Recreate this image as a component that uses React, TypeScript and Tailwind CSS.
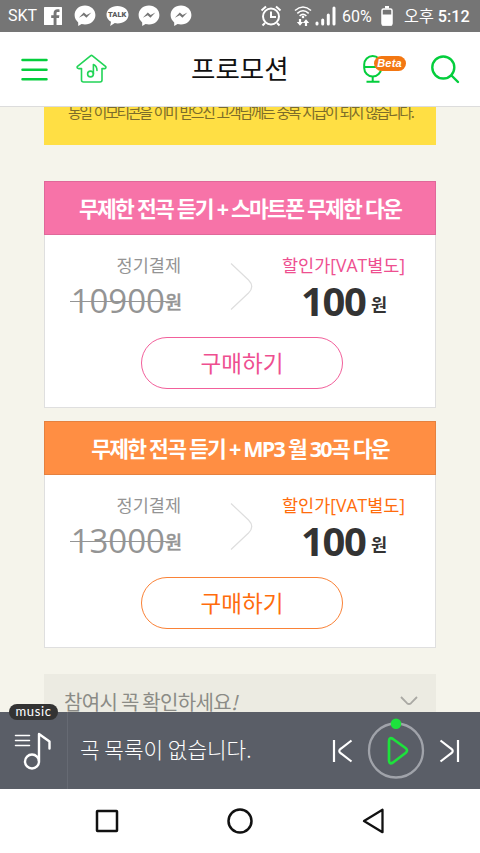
import React from "react";

const KR = "font-['Noto_Sans_CJK_KR',sans-serif]";
const LATIN = "font-['Open_Sans','Noto_Sans_CJK_KR',sans-serif]";
const ROBOTO = "font-['Roboto','Noto_Sans_CJK_KR',sans-serif]";

function MessengerIcon() {
  return (
    <svg width="22" height="22" viewBox="0 0 22 22">
      <path d="M11 0.5C5 0.5 0.6 4.7 0.6 10.1c0 3 1.4 5.6 3.6 7.3v3.6l3.4-1.9c1.1.3 2.2.5 3.4.5 6 0 10.4-4.2 10.4-9.5S17 .5 11 .5Z" fill="#fff" />
      <path d="M4.8 12.8 9.8 7.6l2.8 2.5 4.8-2.6-5 5.3-2.7-2.6Z" fill="#757575" />
    </svg>
  );
}

function StatusBar() {
  return (
    <div className={`flex h-8 shrink-0 items-center bg-[#757575] text-white ${ROBOTO}`}>
      <span className="ml-2 w-9 text-[16px] leading-8 whitespace-nowrap">SKT</span>
      <svg width="18" height="18" viewBox="0 0 18 18">
        <rect width="18" height="18" rx="0.500" fill="#fff" />
        <path fill="#757575" d="M9.600 18v-7H7.200V8.200h2.400V6.200c0-2.600 1.500-3.900 3.900-3.900.9 0 1.700.1 2 .1v2.700H14c-1.200 0-1.500.5-1.500 1.400v1.700h2.900L15 11h-2.500v7Z" />
      </svg>
      <div className="ml-3 flex w-[118px] items-center justify-between">
        <MessengerIcon />
        <div className="relative h-[21px] w-[23px]">
          <svg width="23" height="21" viewBox="0 0 23 21">
            <path fill="#fff" d="M11.500 0C5.200 0 .5 3.800.5 8.700c0 3 1.800 5.600 4.500 7.100l-.8 4.300 4.600-3c.9.200 1.800.3 2.700.3 6.300 0 11-3.800 11-8.700S17.800 0 11.500 0Z" />
          </svg>
          <span className="absolute inset-x-0 top-[2px] text-center text-[7.500px] leading-[13px] font-black text-[#5c5c5c]">TALK</span>
        </div>
        <MessengerIcon />
        <MessengerIcon />
      </div>
      <div className="ml-[68px] flex items-center">
        <svg width="22" height="22" viewBox="0 0 22 22" fill="none" stroke="#fff" strokeWidth="2">
          <circle cx="11" cy="11.500" r="8" />
          <path d="M11 6.500v5.500h5M1.500 5.500 6 1.500M16 1.500l4.500 4M5 18l-2.500 2.500M17 18l2.500 2.500" />
        </svg>
        <svg className="ml-[12px]" width="18" height="22" viewBox="0 0 18 22" fill="none" stroke="#fff" strokeWidth="1.600">
          <path d="M1 5.500Q9-1.500 17 5.500M3.300 8.300Q9 3.200 14.700 8.300M5.600 11Q9 7.800 12.400 11" />
          <circle cx="9" cy="12" r="1.300" fill="#fff" stroke="none" />
          <path d="M6 14v4M12 21v-4" strokeWidth="2.200" />
          <path d="M2.800 17h6.400L6 20.800ZM8.800 18h6.400L12 14.200Z" fill="#fff" stroke="none" />
        </svg>
        <svg className="ml-[3px]" width="21" height="20" viewBox="0 0 21 20" fill="none" stroke="#fff" strokeWidth="3" strokeLinecap="round">
          <path d="M2 18v-1M7.700 18v-4M13.300 18v-9M19 18V2" />
        </svg>
        <span className="mt-px ml-[6px] w-[33px] text-[16px] leading-8">60%</span>
        <svg className="ml-[6px]" width="12" height="20" viewBox="0 0 12 20">
          <path d="M4 0h4v2.500H4Z" fill="#fff" />
          <rect x="1" y="3" width="10" height="16" rx="1.500" fill="none" stroke="#fff" strokeWidth="1.500" />
          <rect x="1" y="8.500" width="10" height="11" fill="#fff" />
        </svg>
        <span className="mt-px ml-[11px] text-[16.200px] leading-8 whitespace-nowrap">오후 <span className="font-medium">5:12</span></span>
      </div>
    </div>
  );
}

function Header() {
  return (
    <header className="flex h-[75px] shrink-0 items-center border-b border-[#dcdcdc] bg-white">
      <svg className="ml-[21px]" width="27" height="24" viewBox="0 0 27 24" stroke="#04ce3c" strokeWidth="2.500" strokeLinecap="round">
        <path d="M1.500 3h24M1.500 12.800h24M1.500 22.300h24" />
      </svg>
      <svg className="ml-[28px]" width="31" height="30" viewBox="0 0 31 30" fill="none" stroke="#22d457" strokeWidth="1.600" strokeLinejoin="round" strokeLinecap="round">
        <path d="M14.500 1.800q1-.8 2 0L29.800 12.600q.5 2-1.400 2H26V26q0 2-2 2H7.500q-2 0-2-2V14.600H2.800q-2 0-1.600-2Z" />
        <circle cx="14.500" cy="20" r="2.900" />
        <path d="M17.400 20v-9.500q3.600 1.500 3.600 6" />
      </svg>
      <h1 className={`-mt-[2px] ml-[84px] w-[98px] text-[26.500px] leading-[40px] whitespace-nowrap text-[#111] ${KR}`}>프로모션</h1>
      <div className="relative ml-[74px] h-[30px] w-[44px]">
        <svg width="44" height="30" viewBox="0 0 44 30" fill="none" stroke="#04ce3c" strokeWidth="2">
          <rect x="1.200" y="2" width="17" height="20.500" rx="8.500" />
          <path d="M1.500 13h16.500M9.700 22.500v5M3.500 27.700h13" />
        </svg>
        <span className="absolute top-[2px] left-[11px] h-[15px] w-[32px] rounded-full bg-[#f37712] pr-px text-center font-['Liberation_Sans',sans-serif] text-[11px] leading-[15px] font-bold tracking-[0.200px] text-white italic">Beta</span>
      </div>
      <svg className="ml-[23px]" width="30" height="30" viewBox="0 0 30 30" fill="none" stroke="#04ce3c" strokeWidth="2.400" strokeLinecap="round">
        <circle cx="13.300" cy="13.500" r="11" />
        <path d="m21.500 21.500 6.500 6.500" />
      </svg>
    </header>
  );
}

interface OfferProps {
  title: string;
  price: string;
  headClass: string;
  labelClass: string;
  buttonClass: string;
}

function Offer({ title, price, headClass, labelClass, buttonClass }: OfferProps) {
  return (
    <section className="h-[227px] border border-[#dfdfdf] bg-white">
      <h2 className={`-mx-px -mt-px h-[54px] border pt-px text-center text-[21.500px] leading-[52px] font-bold tracking-[-1.750px] whitespace-nowrap text-white ${headClass} ${LATIN}`}>{title}</h2>
      <div className="flex h-[102px]">
        <div className="flex w-[136px] flex-col items-end text-[#949494]">
          <span className={`mt-[18px] text-[17.500px] leading-[24px] ${KR}`}>정기결제</span>
          <div className="mt-[2px] flex items-center">
            <span className={`relative text-[33px] leading-[44px] ${LATIN}`}>
              {price}
              <span className="absolute -right-px -left-px top-[22px] h-px bg-[#949494]" />
            </span>
            <span className={`-mr-px text-[18.500px] leading-[44px] font-medium [-webkit-text-stroke:0.400px_#949494] ${KR}`}>원</span>
          </div>
        </div>
        <svg className="mt-[27px] ml-[49px]" width="24" height="50" viewBox="0 0 24 50" fill="none" stroke="#dedede" strokeWidth="1.200">
          <path d="M1 1.500 18.500 18q6.500 6.500 0 13L1 47.500" />
        </svg>
        <div className="ml-[28px] text-[#333]">
          <div className={`mt-[18px] text-[17.500px] leading-[24px] whitespace-nowrap ${labelClass} ${LATIN}`}>할인가[VAT별도]</div>
          <div className="mt-[2px] ml-[19px] flex items-center">
            <span className={`w-[65px] text-[40px] leading-[44px] font-bold tracking-[-1.400px] ${LATIN}`}>100</span>
            <span className={`mt-[6px] ml-[5px] text-[17.500px] leading-[38px] font-bold ${KR}`}>원</span>
          </div>
        </div>
      </div>
      <button className={`ml-[96px] block h-[52px] w-[202px] rounded-full border pb-[2px] text-[22.500px] leading-[48px] ${buttonClass} ${KR}`}>구매하기</button>
    </section>
  );
}

function Player() {
  return (
    <footer className="relative flex h-[77px] shrink-0 items-center bg-[#5a5e67] text-white">
      <span className="absolute -top-[8px] left-[9px] h-[16px] w-[49px] rounded-full bg-[#333] text-center font-['Lato',sans-serif] text-[13px] leading-[14px] tracking-[0.600px]">music</span>
      <div className="flex h-full w-[68px] items-center border-r border-[#666a73]">
        <svg className="ml-[14px]" width="40" height="40" viewBox="0 0 40 40" fill="none" stroke="#fff" strokeLinecap="round" strokeLinejoin="round">
          <path d="M1.500 4.500h14M1.500 9.500h14M1.500 14.500h14" strokeWidth="1.500" />
          <circle cx="18" cy="30.500" r="7" strokeWidth="2.400" />
          <path d="M25 30V3l10.500 7.500v7" strokeWidth="2.400" />
        </svg>
      </div>
      <span className={`-mt-[3px] ml-[12px] w-[174px] text-[21.300px] leading-[30px] font-light whitespace-nowrap ${KR}`}>곡 목록이 없습니다.</span>
      <svg className="ml-[78px]" width="21" height="24" viewBox="0 0 21 24" fill="none" stroke="#fff" strokeWidth="2.200">
        <path d="M2 1v22M19.500 1.500 9 9.500q-3.500 2.500 0 5l10.500 8" />
      </svg>
      <svg className="ml-[14px] overflow-visible" width="58" height="62" viewBox="0 0 58 62" fill="none">
        <circle cx="29" cy="30.500" r="27" stroke="#a0a3aa" strokeWidth="2.300" />
        <circle cx="29" cy="3.800" r="5.300" fill="#1de23c" />
        <path d="M22 22v18q0 5 4 2.500l12.500-9.500q3-2.500 0-5L26 19q-4-2.500-4 2.500Z" stroke="#1de23c" strokeWidth="2.700" />
      </svg>
      <svg className="ml-[14px]" width="21" height="24" viewBox="0 0 21 24" fill="none" stroke="#fff" strokeWidth="2.200">
        <path d="M19 1v22M1.500 1.500 12 9.500q3.500 2.500 0 5l-10.500 8" />
      </svg>
    </footer>
  );
}

export default function App() {
  return (
    <div className="flex h-[853px] w-[480px] flex-col overflow-hidden bg-white">
      <StatusBar />
      <Header />
      <main className="h-[605px] shrink-0 overflow-hidden bg-[#f5f4eb] px-[44px]">
        <div className={`h-[38px] overflow-hidden bg-[#ffdf44] pl-[24px] text-[14.800px] whitespace-nowrap text-[#7c6c2a] ${KR}`}>
          <p className="-mt-[8px] leading-[26px] tracking-[-2.250px] [word-spacing:2px]">동일 이모티콘을 이미 받으신 고객님께는 중복 지급이 되지 않습니다.</p>
        </div>
        <div className="mt-[36px] flex flex-col gap-[13px]">
          <Offer title="무제한 전곡 듣기 + 스마트폰 무제한 다운" price="10900" headClass="bg-[#f773a8] border-[#e0689a]" labelClass="text-[#ee4f90]" buttonClass="border-[#f2609b] text-[#ee4f90]" />
          <Offer title="무제한 전곡 듣기 + MP3 월 30곡 다운" price="13000" headClass="bg-[#ff8e43] border-[#e5813f]" labelClass="text-[#ff6c0c]" buttonClass="border-[#fa8237] text-[#ff6c0c]" />
        </div>
        <div className="mt-[26px] flex h-[60px] items-start bg-[#ecebe2] pl-[20px]">
          <span className={`mt-[13px] text-[20px] leading-[30px] tracking-[-0.700px] whitespace-nowrap text-[#8b8b86] ${KR}`}>참여시 꼭 확인하세요<i>!</i></span>
          <svg className="mt-[22px] mr-[18px] ml-auto" width="18" height="10" viewBox="0 0 18 10" fill="none" stroke="#aaa9a4" strokeWidth="1.800">
            <path d="m1 1 6 6.200q2 1.600 4 0L17 1" />
          </svg>
        </div>
      </main>
      <Player />
      <nav className="flex h-16 shrink-0 items-center">
        <svg className="ml-[95px]" width="24" height="24" viewBox="0 0 24 24" fill="none" stroke="#111" strokeWidth="2.500"><rect x="2" y="2" width="20" height="20" rx="0.500" /></svg>
        <svg className="ml-[108px]" width="26" height="26" viewBox="0 0 26 26" fill="none" stroke="#111" strokeWidth="2.500"><circle cx="13" cy="13" r="11.500" /></svg>
        <svg className="ml-[109px]" width="24" height="26" viewBox="0 0 24 26" fill="none" stroke="#111" strokeWidth="2.300" strokeLinejoin="round"><path d="M20.500 1.800v22.400L2 13Z" /></svg>
      </nav>
    </div>
  );
}
